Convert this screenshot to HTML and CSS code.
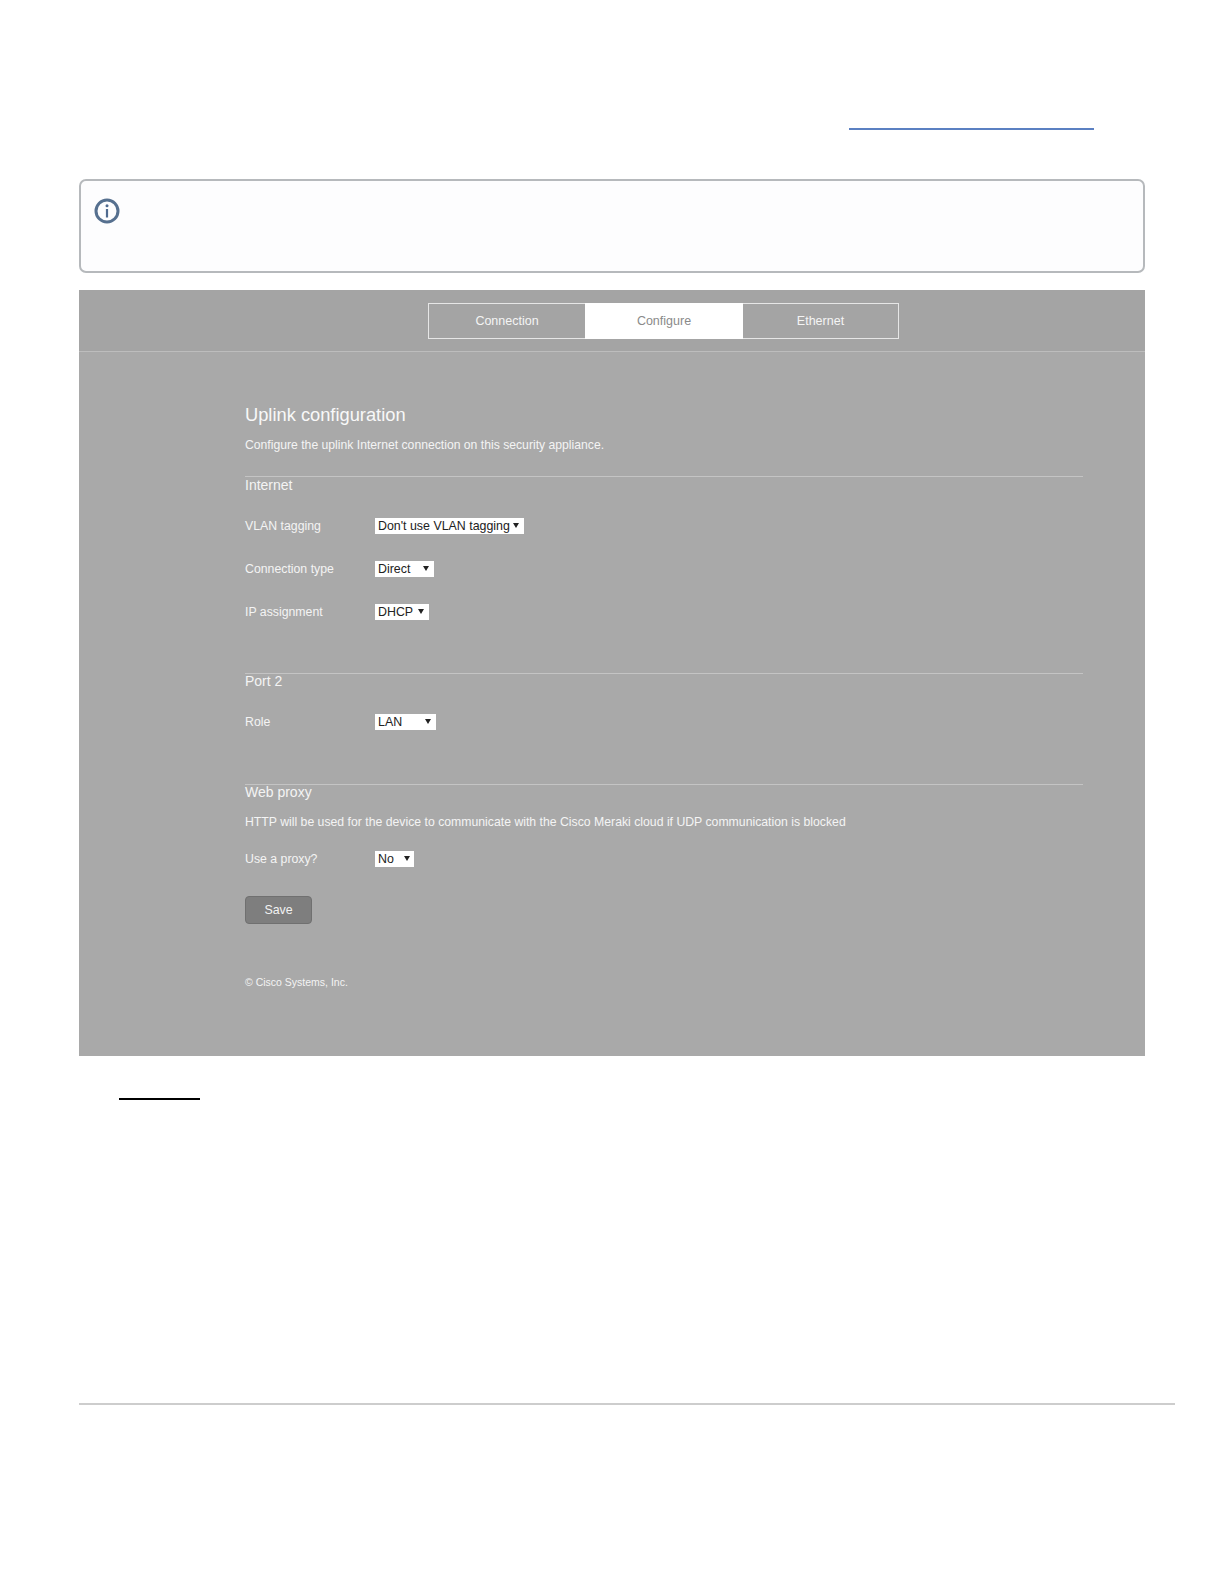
FILE: index.html
```html
<!DOCTYPE html>
<html lang="en">
<head>
<meta charset="utf-8">
<title>Uplink configuration</title>
<link rel="stylesheet" href="styles.css">
</head>
<body>
<div class="page">
  <div class="link-rule"></div>
  <div class="note">
    <svg class="note-icon" width="26" height="26" viewBox="0 0 26 26" aria-hidden="true">
      <circle cx="13" cy="13" r="11" fill="none" stroke="#56708f" stroke-width="3"/>
      <rect x="11.9" y="11" width="2.2" height="8.5" fill="#4f6a8f"/>
      <circle cx="13" cy="7.8" r="1.5" fill="#4f6a8f"/>
    </svg>
  </div>
  <div class="panel">
    <div class="panel-head">
      <div class="tabs">
        <div class="tab tab-first">Connection</div>
        <div class="tab tab-active">Configure</div>
        <div class="tab tab-last">Ethernet</div>
      </div>
    </div>
    <div class="panel-body">
      <h1 class="title">Uplink configuration</h1>
      <p class="intro">Configure the uplink Internet connection on this security appliance.</p>

      <section class="section section-internet">
        <h2 class="section-title">Internet</h2>
        <div class="rows">
          <div class="row"><span class="label">VLAN tagging</span><div class="select select-vlan"><span class="value">Don't use VLAN tagging</span><i class="caret"></i></div></div>
          <div class="row"><span class="label">Connection type</span><div class="select select-conn"><span class="value">Direct</span><i class="caret"></i></div></div>
          <div class="row"><span class="label">IP assignment</span><div class="select select-ip"><span class="value">DHCP</span><i class="caret"></i></div></div>
        </div>
      </section>

      <section class="section section-port">
        <h2 class="section-title section-title-tight">Port 2</h2>
        <div class="rows">
          <div class="row"><span class="label">Role</span><div class="select select-role"><span class="value">LAN</span><i class="caret"></i></div></div>
        </div>
      </section>

      <section class="section section-proxy">
        <h2 class="section-title section-title-tight">Web proxy</h2>
        <p class="proxy-note">HTTP will be used for the device to communicate with the Cisco Meraki cloud if UDP communication is blocked</p>
        <div class="row row-proxy"><span class="label">Use a proxy?</span><div class="select select-no"><span class="value">No</span><i class="caret"></i></div></div>
      </section>

      <button class="save" type="button">Save</button>
      <p class="copyright">© Cisco Systems, Inc.</p>
    </div>
  </div>
  <div class="black-rule"></div>
  <div class="footer-rule"></div>
</div>
</body>
</html>
```
FILE: styles.css
```css
* { box-sizing: border-box; }
html, body { margin: 0; padding: 0; background: #fff; }
body { font-family: "Liberation Sans", Arial, sans-serif; height: 1584px; overflow: hidden; }
.page { padding: 128px 0 0 79px; }

.link-rule { width: 245px; height: 2px; margin-left: 770px; background: #5b80c2; }

.note {
  width: 1066px; height: 94px; margin-top: 49px;
  padding: 17px 0 0 13px;
  background: #fdfdfe; border: 2px solid #b6b9bc; border-radius: 7px;
}
.note-icon { display: block; }

.panel { width: 1066px; height: 766px; margin-top: 17px; background: #a9a9a9; color: #f4f4f4; }
.panel-head { height: 62px; padding: 13px 0 0 349px; background: #a4a4a4; border-bottom: 1px solid #bdbdbd; }
.tabs { display: flex; width: 471px; height: 36px; }
.tab { display: flex; align-items: center; justify-content: center; font-size: 12.5px; border: 1px solid #e6e6e6; }
.tab-first { width: 157px; border-right: 0; }
.tab-active { width: 158px; background: #fff; color: #8a8a8a; border: 0; }
.tab-last { width: 156px; border-left: 0; }

.panel-body { padding: 51px 62px 0 166px; }
.title { margin: 0; font-size: 18.3px; font-weight: 400; line-height: 24px; color: #f8f8f8; }
.intro { margin: 9px 0 0; font-size: 12.2px; line-height: 18px; }

.section { border-top: 1px solid #c4c4c4; }
.section-internet { margin-top: 22px; }
.section-port { margin-top: 53px; }
.section-proxy { margin-top: 54px; }
.section-title { margin: 0; font-size: 14px; font-weight: 400; line-height: 16px; }
.section-title-tight { margin-top: -1px; }

.rows { display: flex; flex-direction: column; gap: 27px; margin-top: 25px; }
.row { display: flex; align-items: center; height: 16px; }
.label { width: 130px; padding-bottom: 1px; font-size: 12.3px; }
.select {
  display: flex; align-items: center; justify-content: space-between;
  height: 16px; padding: 0 5px 0 3px;
  background: #fff; color: #222; font-size: 12.4px;
}
.value { padding-bottom: 1px; white-space: nowrap; }
.caret { width: 0; height: 0; margin-bottom: 2px; border-left: 3px solid transparent; border-right: 3px solid transparent; border-top: 5px solid #222; }
.select-vlan { width: 149px; }
.select-conn { width: 59px; }
.select-ip { width: 54px; }
.select-role { width: 61px; }
.select-no { width: 39px; padding-right: 4px; }

.proxy-note { margin: 13px 0 0; font-size: 12.25px; line-height: 18px; }
.row-proxy { margin-top: 20px; }

.save {
  display: block; width: 67px; height: 28px; margin: 29px 0 0; padding: 0;
  background: #7e7e7e; color: #f2f2f2; border: 1px solid #707070; border-radius: 4px;
  font: 12.4px "Liberation Sans", Arial, sans-serif;
}
.copyright { margin: 51px 0 0; font-size: 10.5px; line-height: 14px; }

.black-rule { width: 81px; height: 2px; margin: 42px 0 0 40px; background: #000; }
.footer-rule { width: 1096px; height: 2px; margin-top: 303px; background: #cdcdcd; }
```
